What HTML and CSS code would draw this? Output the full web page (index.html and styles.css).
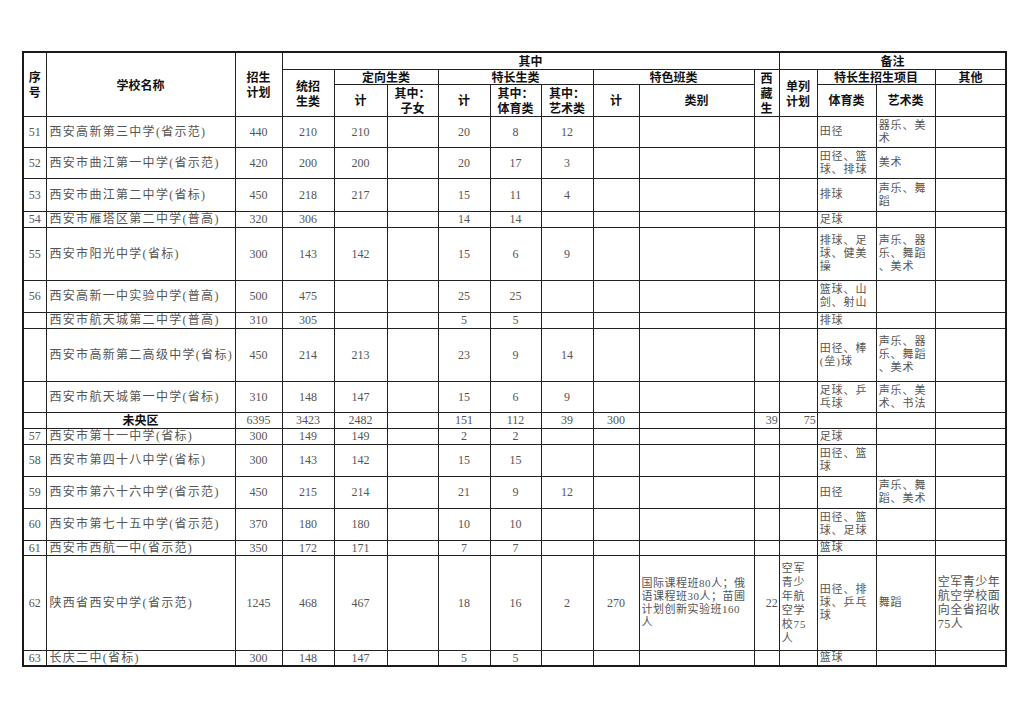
FILE: index.html
```html
<!DOCTYPE html>
<html lang="zh">
<head>
<meta charset="utf-8">
<title>招生计划</title>
<link rel="stylesheet" href="styles.css">
</head>
<body>
<div class="page">
<table class="plan">
<colgroup>
<col class="c-no"><col class="c-name"><col class="c-plan"><col class="c-tz"><col class="c-dx"><col class="c-zn">
<col class="c-tc"><col class="c-ty"><col class="c-ys"><col class="c-ts"><col class="c-lb"><col class="c-xz">
<col class="c-dl"><col class="c-r1"><col class="c-r2"><col class="c-qt">
</colgroup>
<thead>
<tr class="h1">
<th rowspan="3" class="ml">序<br>号</th>
<th rowspan="3">学校名称</th>
<th rowspan="3" class="ml">招生<br>计划</th>
<th colspan="9">其中</th>
<th colspan="4">备注</th>
</tr>
<tr class="h2">
<th rowspan="2" class="ml">统招<br>生类</th>
<th colspan="2">定向生类</th>
<th colspan="3">特长生类</th>
<th colspan="2">特色班类</th>
<th rowspan="2" class="vert">西<br>藏<br>生</th>
<th rowspan="2" class="ml">单列<br>计划</th>
<th colspan="2">特长生招生项目</th>
<th>其他</th>
</tr>
<tr class="h3">
<th>计</th>
<th class="ml">其中：<br>子女</th>
<th>计</th>
<th class="ml">其中：<br>体育类</th>
<th class="ml">其中：<br>艺术类</th>
<th>计</th>
<th>类别</th>
<th>体育类</th>
<th>艺术类</th>
<th></th>
</tr>
</thead>
<tbody>
<tr class="r31"><td class="no">51</td><td class="nm">西安高新第三中学(省示范)</td><td>440</td><td>210</td><td>210</td><td></td><td>20</td><td>8</td><td>12</td><td></td><td></td><td></td><td></td><td class="tx">田径</td><td class="tx">器乐、美<br>术</td><td></td></tr>
<tr class="r31"><td class="no">52</td><td class="nm">西安市曲江第一中学(省示范)</td><td>420</td><td>200</td><td>200</td><td></td><td>20</td><td>17</td><td>3</td><td></td><td></td><td></td><td></td><td class="tx">田径、篮<br>球、排球</td><td class="tx">美术</td><td></td></tr>
<tr class="r33"><td class="no">53</td><td class="nm">西安市曲江第二中学(省标)</td><td>450</td><td>218</td><td>217</td><td></td><td>15</td><td>11</td><td>4</td><td></td><td></td><td></td><td></td><td class="tx">排球</td><td class="tx">声乐、舞<br>蹈</td><td></td></tr>
<tr class="r16"><td class="no">54</td><td class="nm">西安市雁塔区第二中学(普高)</td><td>320</td><td>306</td><td></td><td></td><td>14</td><td>14</td><td></td><td></td><td></td><td></td><td></td><td class="tx">足球</td><td></td><td></td></tr>
<tr class="r53"><td class="no">55</td><td class="nm">西安市阳光中学(省标)</td><td>300</td><td>143</td><td>142</td><td></td><td>15</td><td>6</td><td>9</td><td></td><td></td><td></td><td></td><td class="tx">排球、足<br>球、健美<br>操</td><td class="tx">声乐、器<br>乐、舞蹈<br>、美术</td><td></td></tr>
<tr class="r32"><td class="no">56</td><td class="nm">西安高新一中实验中学(普高)</td><td>500</td><td>475</td><td></td><td></td><td>25</td><td>25</td><td></td><td></td><td></td><td></td><td></td><td class="tx">篮球、山<br>剑、射山</td><td></td><td></td></tr>
<tr class="r16"><td class="no"></td><td class="nm">西安市航天城第二中学(普高)</td><td>310</td><td>305</td><td></td><td></td><td>5</td><td>5</td><td></td><td></td><td></td><td></td><td></td><td class="tx">排球</td><td></td><td></td></tr>
<tr class="r53"><td class="no"></td><td class="nm">西安市高新第二高级中学(省标)</td><td>450</td><td>214</td><td>213</td><td></td><td>23</td><td>9</td><td>14</td><td></td><td></td><td></td><td></td><td class="tx">田径、棒<br>(垒)球</td><td class="tx">声乐、器<br>乐、舞蹈<br>、美术</td><td></td></tr>
<tr class="r31"><td class="no"></td><td class="nm">西安市航天城第一中学(省标)</td><td>310</td><td>148</td><td>147</td><td></td><td>15</td><td>6</td><td>9</td><td></td><td></td><td></td><td></td><td class="tx">足球、乒<br>乓球</td><td class="tx">声乐、美<br>术、书法</td><td></td></tr>
<tr class="r16 sum"><td class="no"></td><td class="area">未央区</td><td>6395</td><td>3423</td><td>2482</td><td></td><td>151</td><td>112</td><td>39</td><td>300</td><td></td><td class="rt">39</td><td class="rt">75</td><td></td><td></td><td></td></tr>
<tr class="r16"><td class="no">57</td><td class="nm">西安市第十一中学(省标)</td><td>300</td><td>149</td><td>149</td><td></td><td>2</td><td>2</td><td></td><td></td><td></td><td></td><td></td><td class="tx">足球</td><td></td><td></td></tr>
<tr class="r32"><td class="no">58</td><td class="nm">西安市第四十八中学(省标)</td><td>300</td><td>143</td><td>142</td><td></td><td>15</td><td>15</td><td></td><td></td><td></td><td></td><td></td><td class="tx">田径、篮<br>球</td><td></td><td></td></tr>
<tr class="r32"><td class="no">59</td><td class="nm">西安市第六十六中学(省示范)</td><td>450</td><td>215</td><td>214</td><td></td><td>21</td><td>9</td><td>12</td><td></td><td></td><td></td><td></td><td class="tx">田径</td><td class="tx">声乐、舞<br>蹈、美术</td><td></td></tr>
<tr class="r32"><td class="no">60</td><td class="nm">西安市第七十五中学(省示范)</td><td>370</td><td>180</td><td>180</td><td></td><td>10</td><td>10</td><td></td><td></td><td></td><td></td><td></td><td class="tx">田径、篮<br>球、足球</td><td></td><td></td></tr>
<tr class="r15"><td class="no">61</td><td class="nm">西安市西航一中(省示范)</td><td>350</td><td>172</td><td>171</td><td></td><td>7</td><td>7</td><td></td><td></td><td></td><td></td><td></td><td class="tx">篮球</td><td></td><td></td></tr>
<tr class="r95"><td class="no">62</td><td class="nm">陕西省西安中学(省示范)</td><td>1245</td><td>468</td><td>467</td><td></td><td>18</td><td>16</td><td>2</td><td>270</td><td class="tx lb">国际课程班80人；俄<br>语课程班30人；苗圃<br>计划创新实验班160<br>人</td><td class="rt">22</td><td class="tx dl">空军<br>青少<br>年航<br>空学<br>校75<br>人</td><td class="tx">田径、排<br>球、乒乓<br>球</td><td class="tx">舞蹈</td><td class="tx qt">空军青少年<br>航空学校面<br>向全省招收<br>75人</td></tr>
<tr class="r16"><td class="no">63</td><td class="nm">长庆二中(省标)</td><td>300</td><td>148</td><td>147</td><td></td><td>5</td><td>5</td><td></td><td></td><td></td><td></td><td></td><td class="tx">篮球</td><td></td><td></td></tr>
</tbody>
</table>
</div>
</body>
</html>
```
FILE: styles.css
```css
html, body {
  margin: 0;
  padding: 0;
  background: #ffffff;
}
.page {
  padding: 51px 0 0 22px;
}
.plan {
  border-collapse: collapse;
  table-layout: fixed;
  width: 983px;
  border: 2px solid #1a1a1a;
  font-family: "Liberation Serif", "Noto Sans CJK SC", serif;
  font-size: 12px;
  color: #555555;
}
.c-no { width: 23px; }
.c-name { width: 189px; }
.c-plan { width: 47px; }
.c-tz { width: 52px; }
.c-dx { width: 53px; }
.c-zn { width: 51px; }
.c-tc { width: 52px; }
.c-ty { width: 51px; }
.c-ys { width: 52px; }
.c-ts { width: 46px; }
.c-lb { width: 115px; }
.c-xz { width: 25px; }
.c-dl { width: 38px; }
.c-r1 { width: 59px; }
.c-r2 { width: 59px; }
.c-qt { width: 71px; }

.plan th, .plan td {
  border: 1px solid #222222;
  padding: 0;
  text-align: center;
  vertical-align: middle;
  line-height: 14px;
  overflow: hidden;
  white-space: nowrap;
}
.plan th {
  font-family: "Noto Sans CJK SC", sans-serif;
  font-weight: 700;
  font-size: 12px;
  color: #111111;
  line-height: 14px;
}
.h1 { height: 17px; }
.h2 { height: 15px; }
.h3 { height: 32px; }
.h1 th, .h2 th { line-height: 13px; }
.plan th.ml { line-height: 15px; }
.plan th.vert { line-height: 15px; }

.r15 { height: 15px; }
.r16 { height: 16px; }
.r31 { height: 31px; }
.r32 { height: 32px; }
.r33 { height: 33px; }
.r53 { height: 53px; }
.r95 { height: 95px; }

.plan td.no {
  font-size: 12px;
}
.plan td.nm {
  text-align: left;
  padding-left: 3px;
  letter-spacing: 1.3px;
  font-size: 12px;
}
.plan td.area {
  font-family: "Noto Sans CJK SC", sans-serif;
  font-weight: 700;
  color: #111111;
  font-size: 12px;
}
.plan td.tx {
  text-align: left;
  padding-left: 2px;
  font-size: 11px;
  letter-spacing: 1px;
  line-height: 13px;
  white-space: nowrap;
}
.plan td.lb {
  letter-spacing: 0.5px;
  line-height: 13px;
}
.plan td.dl {
  line-height: 14px;
}
.plan td.qt {
  font-size: 12px;
  letter-spacing: 0.5px;
  line-height: 14px;
}
.plan td.rt {
  text-align: right;
  padding-right: 1px;
}
```
